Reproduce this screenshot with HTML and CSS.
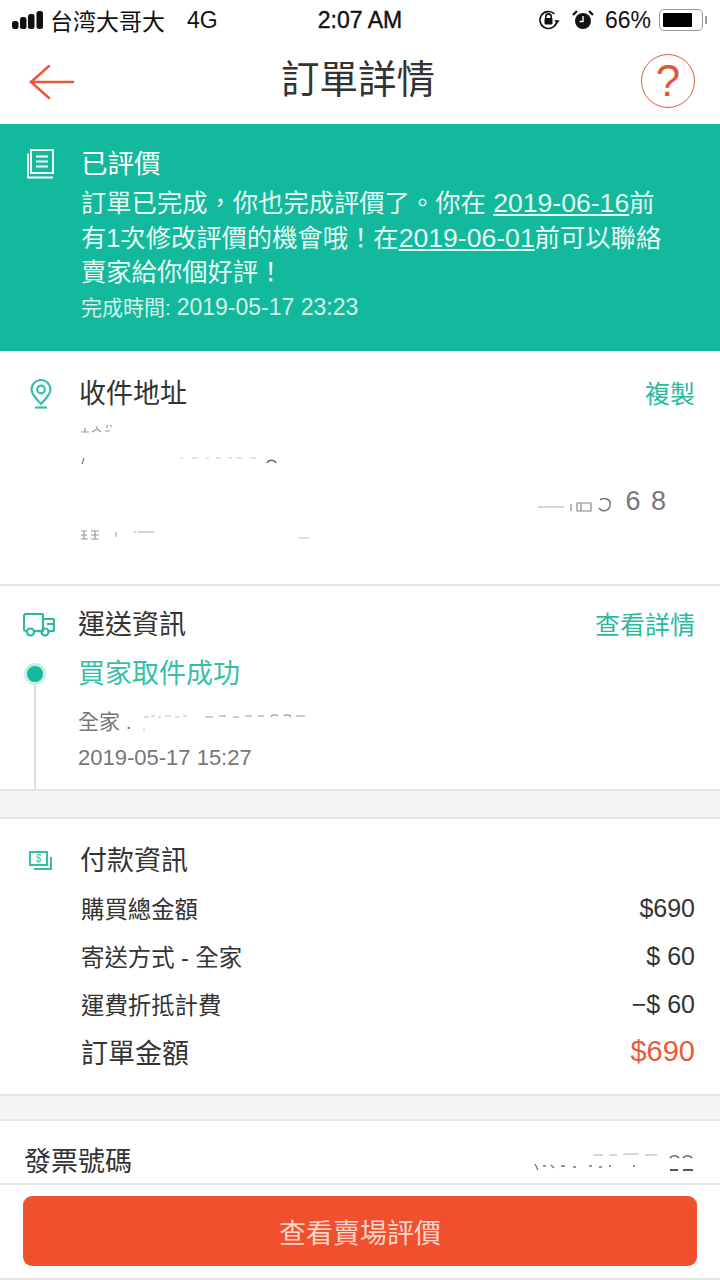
FILE: index.html
```html
<!DOCTYPE html>
<html lang="zh-Hant">
<head>
    <meta charset="UTF-8">
    <meta name="viewport" content="width=device-width, initial-scale=1.0">
    <title>訂單詳情</title>
    <link rel="stylesheet" href="styles.css">
</head>
<body>
    <!-- Status bar -->
    <div class="status-bar">
        <div class="status-left">
            <svg class="signal" width="32" height="20" viewBox="0 0 32 20" fill="#111">
                <rect x="0" y="11" width="6.500" height="8" rx="2.500"></rect>
                <rect x="8" y="7" width="6.500" height="12" rx="2.500"></rect>
                <rect x="16" y="4" width="6.500" height="15" rx="2.500"></rect>
                <rect x="24.500" y="1" width="6.500" height="18" rx="2.500"></rect>
            </svg>
            <span class="carrier">台湾大哥大</span>
            <span class="network">4G</span>
        </div>
        <div class="status-time">2:07 AM</div>
        <div class="status-right">
            <svg class="lock-icon" width="24" height="22" viewBox="0 0 24 22" fill="none" stroke="#111" stroke-width="1.600">
                <path d="M20 11a8.500 8.500 0 1 1-2.600-6.100"></path>
                <path d="M17 11.500l3 3 3-3" fill="#111" stroke="none"></path>
                <path d="M8.800 9V7.600a2.700 2.700 0 0 1 5.400 0V9"></path>
                <rect x="7.500" y="9" width="8" height="6.500" rx="1" fill="#111" stroke="none"></rect>
            </svg>
            <svg class="alarm-icon" width="22" height="22" viewBox="0 0 22 22">
                <circle cx="11" cy="12" r="8" fill="#111"></circle>
                <path d="M11 7v5.500H7.500" fill="none" stroke="#fff" stroke-width="1.400"></path>
                <path d="M1 6l4-4M21 6l-4-4" stroke="#111" stroke-width="2.400"></path>
            </svg>
            <span class="battery-pct">66%</span>
            <div class="battery"><div class="battery-level"></div></div>
            <div class="battery-nub"></div>
        </div>
    </div>

    <!-- Nav -->
    <header class="nav">
        <svg width="46" height="36" viewBox="0 0 46 36" fill="none" stroke="#e8593a" stroke-width="2.500" stroke-linecap="round">
            <path d="M44 18H2"></path>
            <path d="M20 2L2 18l18 16"></path>
        </svg>
        <h1 class="nav-title">訂單詳情</h1>
        <div class="help">?</div>
    </header>

    <!-- Status banner -->
    <section class="banner">
        <svg class="banner-icon" width="27" height="30" viewBox="0 0 27 30" fill="none" stroke="#fff" stroke-width="1.800">
            <path d="M4 1h22v23H4z"></path>
            <path d="M1 4.500V28.500h25"></path>
            <path d="M9 7.500h12M9 12.500h12M9 17.500h12"></path>
        </svg>
        <div class="banner-body">
            <div class="banner-title">已評價</div>
            <p class="banner-text">訂單已完成，你也完成評價了。你在<span class="num"> <u>2019-06-16</u></span>前<br>有1次修改評價的機會哦！在<span class="num"><u>2019-06-01</u></span>前可以聯絡<br>賣家給你個好評！</p>
            <div class="banner-time">完成時間: <span class="num">2019-05-17 23:23</span></div>
        </div>
    </section>

    <!-- Address (the recipient's details are wiped out in the screenshot, only marks are left) -->
    <section class="address">
        <div class="section-head">
            <svg class="pin-icon" width="22" height="30" viewBox="0 0 22 30" fill="none" stroke="#35bfa9" stroke-width="2.200">
                <path d="M11 25C6 19.500 1.500 15.500 1.500 10.500a9.500 9.500 0 0 1 19 0C20.500 15.500 16 19.500 11 25z"></path>
                <circle cx="11" cy="10.500" r="3.800"></circle>
                <path d="M5 28.500h12"></path>
            </svg>
            <span class="section-title">收件地址</span>
            <a class="link">複製</a>
        </div>
        <div class="addr-line addr-one">
            <svg width="34" height="10" viewBox="0 0 34 10" fill="none" stroke="#999" stroke-width="1.200">
                <path d="M1 8h8M5 4v4M12 8l5-3 4 3M17 2v3M27 1v3M31 1v2M25 7h5"></path>
            </svg>
        </div>
        <div class="addr-line addr-two">
            <svg width="198" height="8" viewBox="0 0 198 8" fill="none" stroke="#777" stroke-width="1.200">
                <path d="M4 1L2 7"></path>
                <path d="M100 1h3M112 1h6M126 1h3M136 1h5M148 1h4M156 1h6M170 1h6" stroke="#ccc"></path>
                <path d="M187 6a5 5 0 0 1 9 0" stroke="#666" stroke-width="1.500"></path>
            </svg>
        </div>
        <div class="addr-line addr-three">
            <svg class="addr-marks" width="76" height="14" viewBox="0 0 76 14" fill="none" stroke="#888" stroke-width="1.200">
                <path d="M1 9h26" stroke="#bbb"></path>
                <path d="M34 6v7M40 5h14v8H40zM44 5v8"></path>
                <path d="M63 2a6 5 0 0 1 10 5a6 6 0 0 1-11 3" stroke="#777" stroke-width="1.500"></path>
            </svg>
            <span class="addr-digits">6 8</span>
        </div>
        <div class="addr-line addr-four">
            <svg width="230" height="12" viewBox="0 0 230 12" fill="none" stroke="#999" stroke-width="1.200">
                <path d="M1 2h6M1 6h6M1 10h7M4 2v8M11 2h8M11 6h8M11 10h8M15 2v8"></path>
                <path d="M36 3v5M54 3h2M58 3h16" stroke="#aaa"></path>
                <path d="M218 9h11" stroke="#ccc"></path>
            </svg>
        </div>
    </section>

    <!-- Shipping -->
    <section class="shipping">
        <div class="section-head">
            <svg class="truck-icon" width="32" height="24" viewBox="0 0 32 24" fill="none" stroke="#2cb9a2" stroke-width="2.200" stroke-linejoin="round">
                <path d="M3.500 18H3a2 2 0 0 1-2-2V3a2 2 0 0 1 2-2h16a1 1 0 0 1 1 1v16h-2"></path>
                <path d="M20 6h10a1 1 0 0 1 1 1v10a1 1 0 0 1-1 1h-4.500"></path>
                <path d="M24 11h7"></path>
                <path d="M11.500 18h7"></path>
                <circle cx="7.500" cy="19" r="3.500"></circle>
                <circle cx="22" cy="19" r="3.500"></circle>
            </svg>
            <span class="section-title">運送資訊</span>
            <a class="link">查看詳情</a>
        </div>
        <div class="track">
            <div class="track-rail">
                <div class="track-dot"></div>
                <div class="track-line"></div>
            </div>
            <div class="track-body">
                <div class="track-status">買家取件成功</div>
                <div class="track-carrier">
                    <span>全家 .</span>
                    <svg width="164" height="18" viewBox="0 0 164 18" fill="none" stroke="#999" stroke-width="1.200">
                        <path d="M1 3h5M8 2h4M15 3h3M22 2h6M32 3h4M40 2h4" stroke="#bbb"></path>
                        <path d="M1 14v3" stroke="#ccc"></path>
                        <path d="M62 3h8M76 2h7M90 3h6M102 2h7M115 2h6M128 3a4 3 0 0 1 7-1M141 2a4 3 0 0 1 7 1M153 2h9"></path>
                    </svg>
                </div>
                <div class="track-date">2019-05-17 15:27</div>
            </div>
        </div>
    </section>

    <div class="gap gap-first"></div>

    <!-- Payment -->
    <section class="payment">
        <div class="section-head pay-head">
            <svg class="cash-icon" width="24" height="20" viewBox="0 0 24 20" fill="none" stroke="#35bfa9" stroke-width="2">
                <rect x="1" y="1" width="17" height="13"></rect>
                <path d="M22 6v12H5"></path>
                <text x="9.500" y="11" font-size="10" fill="#35bfa9" stroke="none" text-anchor="middle" font-family="Liberation Sans">$</text>
            </svg>
            <span class="section-title">付款資訊</span>
        </div>
        <div class="pay-row"><span>購買總金額</span><span class="pay-value">$690</span></div>
        <div class="pay-row"><span>寄送方式 - 全家</span><span class="pay-value">$ 60</span></div>
        <div class="pay-row"><span>運費折抵計費</span><span class="pay-value">−$ 60</span></div>
        <div class="pay-row pay-total"><span>訂單金額</span><span class="pay-amount">$690</span></div>
    </section>

    <div class="gap gap-second"></div>

    <!-- Invoice -->
    <section class="invoice">
        <span class="section-title">發票號碼</span>
        <svg width="162" height="20" viewBox="0 0 162 20" fill="none" stroke="#888" stroke-width="1.400">
            <path d="M60 3h10M76 3h8M90 2h16M112 3h12" stroke="#ccc"></path>
            <path d="M137 6a5 4 0 0 1 9 0M150 6a5 4 0 0 1 9 0" stroke="#666" stroke-width="1.600"></path>
            <path d="M2 12l3 6M10 14h3M18 13l3 3M28 14h4M40 15h3M56 14h3M66 15h3M76 14h2M100 14h2" stroke="#777"></path>
            <path d="M137 18h8M150 18h10" stroke="#555" stroke-width="2"></path>
        </svg>
    </section>

    <!-- Footer action -->
    <footer class="action">
        <button class="action-btn">查看賣場評價</button>
    </footer>
</body>
</html>
```
FILE: styles.css
```css
html, body {
    margin: 0;
    padding: 0;
}

body {
    width: 720px;
    height: 1280px;
    overflow: hidden;
    background: #fff;
    color: #333;
    font-family: "Liberation Sans", "Noto Sans CJK TC", sans-serif;
}

/* Status bar */
.status-bar {
    height: 40px;
    display: grid;
    grid-template-columns: 1fr auto 1fr;
    align-items: center;
    padding: 0 12px;
    color: #111;
    font-size: 23px;
}

.status-left {
    display: flex;
    align-items: center;
}

.signal {
    margin-right: 6px;
}

.network {
    margin-left: 22px;
}

.status-time {
    font-weight: 500;
    -webkit-text-stroke: 0.4px #111;
}

.status-right {
    display: flex;
    align-items: center;
    justify-content: flex-end;
    margin-right: 1px;
}

.lock-icon {
    margin-right: 11px;
}

.alarm-icon {
    margin-right: 11px;
}

.battery {
    width: 44px;
    height: 22px;
    box-sizing: border-box;
    margin-left: 8px;
    padding: 3px;
    border: 1.5px solid #999;
    border-radius: 5px;
}

.battery-level {
    width: 29px;
    height: 100%;
    background: #000;
    border-radius: 1px;
}

.battery-nub {
    width: 2px;
    height: 8px;
    margin-left: 2px;
    background: #999;
}

/* Nav */
.nav {
    height: 84px;
    display: flex;
    align-items: center;
    justify-content: space-between;
    padding: 0 25px 0 29px;
}

.nav-title {
    margin: 0 0 12px 0;
    font-size: 38.5px;
    font-weight: 400;
    color: #333;
}

.help {
    width: 52px;
    height: 52px;
    margin-bottom: 3px;
    display: flex;
    align-items: center;
    justify-content: center;
    border: 1.5px solid #e0583a;
    border-radius: 50%;
    color: #e0583a;
    font-size: 44px;
    line-height: 1;
}

/* Banner */
.banner {
    height: 227px;
    box-sizing: border-box;
    display: flex;
    padding: 24px 0 0 27px;
    background: #13b99c;
    color: #fff;
}

.banner-icon {
    margin: 1px 27px 0 0;
    flex-shrink: 0;
}

.banner-title {
    font-size: 26.5px;
    line-height: 32px;
}

.banner-text {
    margin: 6px 0 0;
    font-size: 25.3px;
    line-height: 34.5px;
    color: #e6f8f4;
    white-space: nowrap;
}

.banner-text .num {
    font-size: 26.6px;
}

.banner-time {
    margin-top: 2px;
    font-size: 21px;
    line-height: 30px;
    color: #d3f1ea;
}

.banner-time .num {
    font-size: 23px;
}

/* Shared section header */
.section-head {
    display: flex;
    align-items: center;
}

.section-title {
    font-size: 27px;
    line-height: 40px;
    color: #333;
}

.link {
    margin-left: auto;
    font-size: 25px;
    line-height: 40px;
    color: #2cb9a2;
}

/* Address */
.address {
    height: 235px;
    box-sizing: border-box;
    padding: 23px 25px 0 30px;
    border-bottom: 2px solid #e6e6e6;
}

.pin-icon {
    margin-right: 27px;
}

.addr-line {
    display: flex;
    align-items: center;
    padding-left: 50px;
    color: #777;
}

.addr-one {
    height: 30px;
}

.addr-two {
    height: 34px;
}

.addr-three {
    height: 46px;
    justify-content: flex-end;
    padding-right: 29px;
}

.addr-marks {
    margin: 8px 12px 0 0;
}

.addr-digits {
    font-size: 27px;
    word-spacing: 3px;
}

.addr-four {
    height: 22px;
}

/* Shipping */
.shipping {
    height: 205px;
    box-sizing: border-box;
    padding: 19px 25px 0 23px;
    border-bottom: 2px solid #e6e6e6;
}

.truck-icon {
    margin-right: 23px;
}

.track {
    display: flex;
    height: 134px;
    margin-top: 10px;
}

.track-rail {
    width: 24px;
    margin-right: 31px;
    display: flex;
    flex-direction: column;
    align-items: center;
}

.track-dot {
    width: 16px;
    height: 16px;
    margin-top: 8px;
    flex-shrink: 0;
    background: #13b99c;
    border: 3px solid #c6eee6;
    border-radius: 50%;
}

.track-line {
    flex: 1;
    width: 2px;
    background: #dedede;
}

.track-status {
    font-size: 27px;
    line-height: 38px;
    color: #35bfa9;
}

.track-carrier {
    display: flex;
    align-items: center;
    gap: 11px;
    margin-top: 14px;
    font-size: 21px;
    line-height: 30px;
    color: #777;
}

.track-carrier svg {
    margin-top: 2px;
}

.track-date {
    margin-top: 6px;
    font-size: 22px;
    line-height: 30px;
    color: #777;
}

.gap {
    box-sizing: border-box;
    background: #f5f5f5;
    border-bottom: 2px solid #e6e6e6;
}

.gap-first {
    height: 28px;
}

.gap-second {
    height: 25px;
}

/* Payment */
.payment {
    height: 277px;
    box-sizing: border-box;
    padding: 22px 25px 0 29px;
    border-bottom: 2px solid #e6e6e6;
}

.pay-head {
    margin-bottom: 3px;
}

.cash-icon {
    margin-right: 27px;
}

.pay-row {
    display: flex;
    justify-content: space-between;
    height: 48px;
    align-items: center;
    padding-left: 52px;
    font-size: 23.4px;
    color: #333;
}

.pay-value {
    font-size: 25px;
}

.pay-total {
    height: 46px;
    font-size: 27px;
}

.pay-amount {
    font-size: 29px;
    color: #e8593a;
}

/* Invoice */
.invoice {
    height: 64px;
    box-sizing: border-box;
    display: flex;
    align-items: center;
    justify-content: space-between;
    padding: 20px 25px 0 24px;
    border-bottom: 2px solid #e6e6e6;
}

/* Footer action */
.action {
    height: 95px;
    box-sizing: border-box;
    padding: 11px 23px 0;
    border-bottom: 2px solid #e6e6e6;
}

.action-btn {
    display: block;
    width: 100%;
    height: 70px;
    padding: 0;
    border: 0;
    border-radius: 9px;
    background: #f0502e;
    color: #fbd5c9;
    font: inherit;
    font-size: 27px;
}
```
